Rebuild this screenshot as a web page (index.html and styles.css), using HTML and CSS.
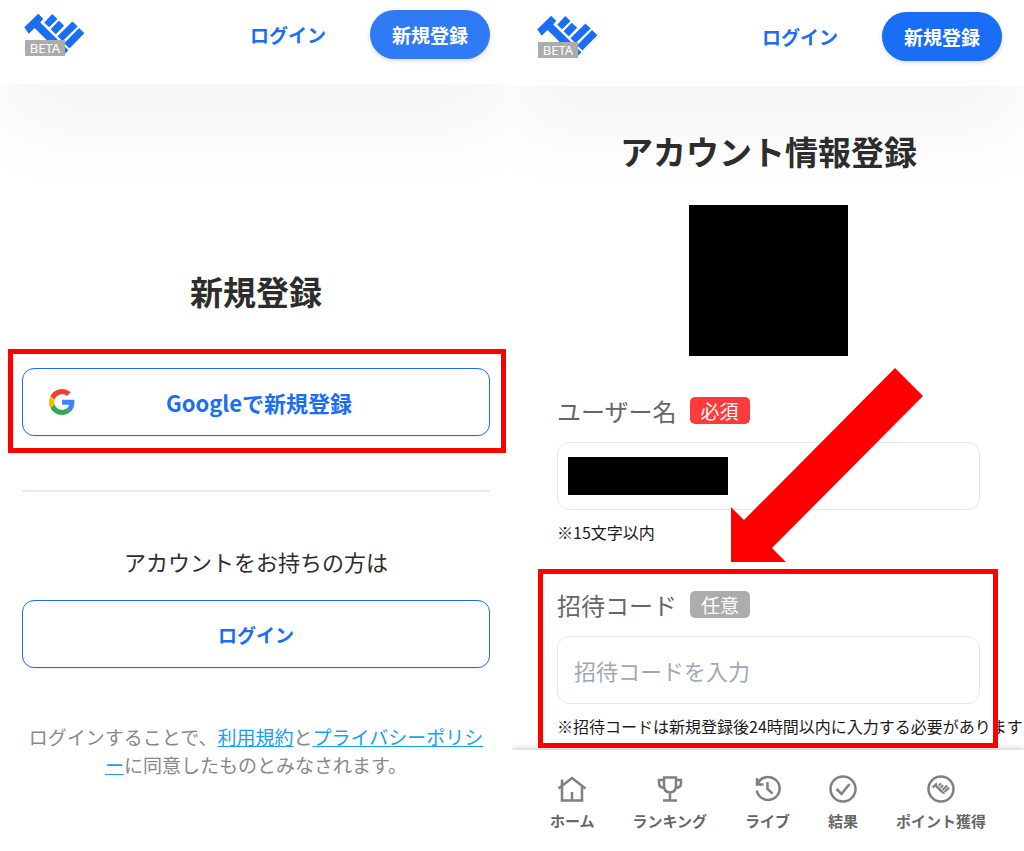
FILE: index.html
```html
<!DOCTYPE html>
<html lang="ja">
<head>
<meta charset="utf-8">
<meta name="viewport" content="width=device-width, initial-scale=1">
<title>新規登録</title>
<link rel="stylesheet" href="styles.css">
</head>
<body>
<svg class="symbols" aria-hidden="true">
  <symbol id="fist" viewBox="72 40 184 124">
    <path d="M73 82 115 41 130 56 121 67 206 151 195 162 160 140 104 84 86 101ZM157 42 173 57 148 82 133 68ZM177 62 193 77 168 103 152 88ZM218 64 234 79 188 124 173 109ZM238 84 254 100 209 146 193 130Z"/>
  </symbol>
</svg>
<div class="screens">
  <section class="screen">
    <header class="header">
      <a class="logo" href="#" aria-label="ホーム"><svg class="logo-mark"><use href="#fist"/></svg><span class="beta">BETA</span></a>
      <a class="header-login" href="#">ログイン</a>
      <button class="signup signup-pressed" type="button">新規登録</button>
    </header>
    <main class="register">
      <h1 class="title">新規登録</h1>
      <div class="google-wrap">
        <button class="outline google" type="button">
          <svg class="google-icon" viewBox="0 0 48 48" aria-hidden="true">
            <path fill="#ea4335" d="M24 9.500c3.500 0 6.700 1.200 9.200 3.600l6.900-6.900C35.900 2.400 30.500 0 24 0 14.600 0 6.500 5.400 2.600 13.200l8 6.200C12.400 13.700 17.700 9.500 24 9.500z"/>
            <path fill="#4285f4" d="M47 24.600c0-1.600-.2-3.100-.4-4.600H24v9h12.900c-.6 3-2.300 5.500-4.800 7.200l7.700 6C44.400 38 47 31.800 47 24.600z"/>
            <path fill="#fbbc05" d="M10.500 28.600a14.500 14.500 0 0 1 0-9.200l-8-6.200a24 24 0 0 0 0 21.600z"/>
            <path fill="#34a853" d="M24 48c6.500 0 11.900-2.100 15.900-5.800l-7.700-6c-2.200 1.400-4.900 2.300-8.200 2.300-6.300 0-11.600-4.200-13.500-9.900l-8 6.200C6.500 42.600 14.600 48 24 48z"/>
          </svg>
          <span>Googleで新規登録</span>
        </button>
      </div>
      <hr class="divider">
      <p class="lead">アカウントをお持ちの方は</p>
      <button class="outline login" type="button">ログイン</button>
      <p class="terms">ログインすることで、<a href="#">利用規約</a>と<a href="#">プライバシーポリシー</a>に同意したものとみなされます。</p>
    </main>
  </section>

  <section class="screen screen-account">
    <header class="header">
      <a class="logo" href="#" aria-label="ホーム"><svg class="logo-mark"><use href="#fist"/></svg><span class="beta">BETA</span></a>
      <a class="header-login" href="#">ログイン</a>
      <button class="signup" type="button">新規登録</button>
    </header>
    <main class="account">
      <h1 class="title">アカウント情報登録</h1>
      <div class="avatar"></div>
      <div class="field">
        <div class="field-head"><label for="user">ユーザー名</label><span class="tag tag-required">必須</span></div>
        <div class="control"><input class="input" id="user" type="text"><span class="mask"></span></div>
        <p class="note">※15文字以内</p>
      </div>
      <div class="field field-marked">
        <div class="field-head"><label for="code">招待コード</label><span class="tag">任意</span></div>
        <div class="control"><input class="input" id="code" type="text" placeholder="招待コードを入力"></div>
        <p class="note">※招待コードは新規登録後24時間以内に入力する必要があります</p>
      </div>
      <svg class="arrow" viewBox="0 0 192 194" aria-hidden="true"><path fill="#f00" d="M0 194V139L13 152 164 0 192 28 41 180 55 194Z"/></svg>
    </main>
    <nav class="nav">
      <a href="#"><svg viewBox="0 0 30 28"><path d="M1.500 13.500 15 3 28.500 13.500M5 11V25.500H25V11M5 11V4.500M15 25V17"/></svg>ホーム</a>
      <a href="#"><svg viewBox="0 0 30 28"><path d="M9 2.500H21V11Q21 17 15 17.500 9 17 9 11ZM9 5H4V8Q4 13 10 13M21 5H26V8Q26 13 20 13M15 18V25M8 25.500H22"/></svg>ランキング</a>
      <a href="#"><svg viewBox="0 0 30 28"><path d="M4 3V9.500H10.500M4.500 9A11.500 11.500 0 1 1 3.800 15.500M14.500 7V14L19.500 18.500"/></svg>ライブ</a>
      <a href="#"><svg viewBox="0 0 30 28"><circle cx="15" cy="14" r="12.500"/><path d="M8.500 14 13.500 19 21.500 9"/></svg>結果</a>
      <a href="#"><svg viewBox="0 0 30 28"><circle cx="15" cy="14" r="12.500"/><use class="solid" href="#fist" x="6" y="7" width="18" height="13"/></svg>ポイント獲得</a>
    </nav>
  </section>
</div>
</body>
</html>
```
FILE: styles.css
```css
* { box-sizing: border-box; }

body {
  margin: 0;
  background: #fff;
  color: #2d2d2d;
  font-family: "Noto Sans CJK JP", "Noto Sans", sans-serif;
}

button, input { font-family: inherit; }
p, h1 { margin: 0; }
.symbols { position: absolute; width: 0; height: 0; }

.screens {
  display: grid;
  grid-template-columns: 1fr 1fr;
  min-height: 100vh;
}

.screen {
  position: relative;
  display: flex;
  flex-direction: column;
  min-width: 0;
  overflow: hidden;
}

.header {
  display: flex;
  align-items: flex-start;
  padding: 10px 22px 25px 24px;
  background: #fff;
  box-shadow: 0 34px 90px rgba(0, 0, 0, 0.06);
}

.screen-account .header { padding: 12px 22px 25px 25px; }

.logo {
  position: relative;
  flex: none;
  width: 61px;
  height: 49px;
  padding-top: 3px;
}

.logo-mark {
  display: block;
  width: 61px;
  height: 42px;
  fill: #1a6df5;
}

.beta {
  position: absolute;
  left: 1px;
  top: 30px;
  width: 40px;
  height: 16px;
  background: #acacac;
  color: #fff;
  font: 13px/17px "Noto Sans", sans-serif;
  text-align: center;
}

.header-login {
  margin-left: auto;
  color: #1a6df5;
  font-size: 19px;
  font-weight: 700;
  line-height: 49px;
  text-decoration: none;
}

.signup {
  width: 120px;
  height: 49px;
  margin-left: 44px;
  padding: 0;
  border: 0;
  border-radius: 25px;
  background: #1a6df5;
  box-shadow: 0 2px 4px rgba(0, 0, 0, 0.15);
  color: #fff;
  font-size: 19px;
  font-weight: 700;
}

.signup-pressed { background: #317af5; }

.title {
  font-size: 33px;
  font-weight: 700;
  line-height: 48px;
  text-align: center;
}

.register {
  position: relative;
  padding: 183px 22px 0;
}

.google-wrap {
  position: relative;
  margin-top: 53px;
}

.google-wrap::after,
.field-marked::after {
  content: "";
  position: absolute;
  border: 5px solid #f00;
  pointer-events: none;
}

.google-wrap::after { inset: -19px -16px -17px -14px; }

.outline {
  display: block;
  width: 100%;
  height: 68px;
  padding: 0;
  border: 1px solid #1a6df5;
  border-radius: 12px;
  background: #fff;
  box-shadow: 0 1px 2px rgba(0, 0, 0, 0.08);
  color: #1a6df5;
  font-size: 19px;
  font-weight: 700;
}

.google {
  display: grid;
  grid-template-columns: 26px 1fr 26px;
  align-items: center;
  padding: 0 20px 0 26px;
  font-size: 22px;
}

.google-icon { width: 26px; height: 26px; }

.divider {
  height: 2px;
  margin: 54px 0 0;
  border: 0;
  background: #e6ebf1;
}

.lead {
  margin-top: 51px;
  font-size: 22px;
  line-height: 36px;
  text-align: center;
}

.login { margin-top: 21px; }

.terms {
  margin-top: 55px;
  color: #888;
  font-size: 19px;
  line-height: 28px;
  text-align: center;
  word-break: break-all;
  line-break: anywhere;
}

.terms a { color: #169ff5; }

.account {
  position: relative;
  padding: 41px 44px 8px 45px;
}

.avatar {
  width: 159px;
  height: 151px;
  margin: 30px auto 0;
  background: #000;
}

.field { position: relative; margin-top: 36px; }
.field + .field { margin-top: 42px; }
.field-marked::after { inset: -17px -18px -10px -19px; }

.field-head {
  display: flex;
  align-items: center;
  gap: 13px;
  height: 36px;
  color: #666;
  font-size: 24px;
}

.tag {
  width: 60px;
  border-radius: 5px;
  background: #acacac;
  color: #fff;
  font-size: 19px;
  line-height: 27px;
  text-align: center;
}

.tag-required { background: #fd3b3b; }

.control { position: relative; margin-top: 14px; }

.input {
  display: block;
  width: 100%;
  height: 68px;
  padding: 0 16px;
  border: 1px solid #e1e8f0;
  border-radius: 12px;
  background: #fff;
  font-size: 22px;
}

.input::placeholder { color: #a0a8b6; opacity: 1; }

.mask {
  position: absolute;
  left: 11px;
  top: 15px;
  width: 160px;
  height: 38px;
  background: #000;
}

.note {
  margin-top: 10px;
  color: #1a1a1a;
  font-size: 16px;
  line-height: 24px;
  white-space: nowrap;
}

.arrow {
  position: absolute;
  left: 219px;
  top: 282px;
  width: 192px;
  height: 194px;
}

.nav {
  display: flex;
  justify-content: center;
  gap: 38px;
  margin-top: auto;
  padding: 25px 0 18px;
  background: #fff;
  box-shadow: 0 -2px 6px rgba(0, 0, 0, 0.18);
}

.nav a {
  display: flex;
  flex-direction: column;
  align-items: center;
  gap: 6px;
  color: #666;
  font-size: 15px;
  font-weight: 700;
  line-height: 24px;
  text-decoration: none;
}

.nav svg {
  width: 30px;
  height: 28px;
  fill: none;
  stroke: #808080;
  stroke-width: 2.5;
}

.nav .solid { fill: #808080; stroke: none; }
```
